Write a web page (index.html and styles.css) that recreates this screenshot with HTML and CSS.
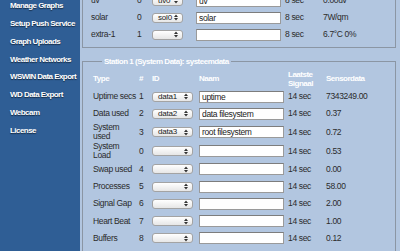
FILE: index.html
```html
<!DOCTYPE html>
<html>
<head>
<meta charset="utf-8">
<link rel="stylesheet" href="styles.css">
</head>
<body>
<nav class="sidebar">
  <a class="nav-item">Manage Graphs</a>
  <a class="nav-item">Setup Push Service</a>
  <a class="nav-item">Graph Uploads</a>
  <a class="nav-item">Weather Networks</a>
  <a class="nav-item">WSWIN Data Export</a>
  <a class="nav-item">WD Data Export</a>
  <a class="nav-item">Webcam</a>
  <a class="nav-item">License</a>
</nav>
<main class="main">
  <fieldset class="box box-sensors">
    <div class="row grid-top">
      <span>uv</span><span>0</span>
      <span><span class="select select-sm">uv0<svg class="arrows" width="4" height="7" viewBox="0 0 4 7"><path d="M0 3 L2 0.5 L4 3 Z M0 4 L2 6.5 L4 4 Z" fill="#333"/></svg></span></span>
      <span><input class="field" type="text" value="uv"></span>
      <span>8 sec</span><span>0.00uv</span>
    </div>
    <div class="row grid-top">
      <span>solar</span><span>0</span>
      <span><span class="select select-sm">sol0<svg class="arrows" width="4" height="7" viewBox="0 0 4 7"><path d="M0 3 L2 0.5 L4 3 Z M0 4 L2 6.5 L4 4 Z" fill="#333"/></svg></span></span>
      <span><input class="field" type="text" value="solar"></span>
      <span>8 sec</span><span>7W/qm</span>
    </div>
    <div class="row grid-top">
      <span>extra-1</span><span>1</span>
      <span><span class="select select-sm"><svg class="arrows" width="4" height="7" viewBox="0 0 4 7"><path d="M0 3 L2 0.5 L4 3 Z M0 4 L2 6.5 L4 4 Z" fill="#333"/></svg></span></span>
      <span><input class="field" type="text" value=""></span>
      <span>8 sec</span><span>6.7°C 0%</span>
    </div>
  </fieldset>

  <fieldset class="box box-station">
    <legend class="legend">Station 1 (System Data): systeemdata</legend>
    <div class="row grid-station head">
      <span>Type</span><span>#</span><span>ID</span><span>Naam</span><span>Laatste<br>Signaal</span><span>Sensordata</span>
    </div>
    <div class="row grid-station">
      <span>Uptime secs</span><span>1</span>
      <span><span class="select">data1<svg class="arrows" width="4" height="7" viewBox="0 0 4 7"><path d="M0 3 L2 0.5 L4 3 Z M0 4 L2 6.5 L4 4 Z" fill="#333"/></svg></span></span>
      <span><input class="field" type="text" value="uptime"></span>
      <span>14 sec</span><span>7343249.00</span>
    </div>
    <div class="row grid-station">
      <span>Data used</span><span>2</span>
      <span><span class="select">data2<svg class="arrows" width="4" height="7" viewBox="0 0 4 7"><path d="M0 3 L2 0.5 L4 3 Z M0 4 L2 6.5 L4 4 Z" fill="#333"/></svg></span></span>
      <span><input class="field" type="text" value="data filesystem"></span>
      <span>14 sec</span><span>0.37</span>
    </div>
    <div class="row grid-station tall">
      <span>System<br>used</span><span>3</span>
      <span><span class="select">data3<svg class="arrows" width="4" height="7" viewBox="0 0 4 7"><path d="M0 3 L2 0.5 L4 3 Z M0 4 L2 6.5 L4 4 Z" fill="#333"/></svg></span></span>
      <span><input class="field" type="text" value="root filesystem"></span>
      <span>14 sec</span><span>0.72</span>
    </div>
    <div class="row grid-station tall">
      <span>System<br>Load</span><span>0</span>
      <span><span class="select"><svg class="arrows" width="4" height="7" viewBox="0 0 4 7"><path d="M0 3 L2 0.5 L4 3 Z M0 4 L2 6.5 L4 4 Z" fill="#333"/></svg></span></span>
      <span><input class="field" type="text" value=""></span>
      <span>14 sec</span><span>0.53</span>
    </div>
    <div class="row grid-station">
      <span>Swap used</span><span>4</span>
      <span><span class="select"><svg class="arrows" width="4" height="7" viewBox="0 0 4 7"><path d="M0 3 L2 0.5 L4 3 Z M0 4 L2 6.5 L4 4 Z" fill="#333"/></svg></span></span>
      <span><input class="field" type="text" value=""></span>
      <span>14 sec</span><span>0.00</span>
    </div>
    <div class="row grid-station">
      <span>Processes</span><span>5</span>
      <span><span class="select"><svg class="arrows" width="4" height="7" viewBox="0 0 4 7"><path d="M0 3 L2 0.5 L4 3 Z M0 4 L2 6.5 L4 4 Z" fill="#333"/></svg></span></span>
      <span><input class="field" type="text" value=""></span>
      <span>14 sec</span><span>58.00</span>
    </div>
    <div class="row grid-station">
      <span>Signal Gap</span><span>6</span>
      <span><span class="select"><svg class="arrows" width="4" height="7" viewBox="0 0 4 7"><path d="M0 3 L2 0.5 L4 3 Z M0 4 L2 6.5 L4 4 Z" fill="#333"/></svg></span></span>
      <span><input class="field" type="text" value=""></span>
      <span>14 sec</span><span>2.00</span>
    </div>
    <div class="row grid-station">
      <span>Heart Beat</span><span>7</span>
      <span><span class="select"><svg class="arrows" width="4" height="7" viewBox="0 0 4 7"><path d="M0 3 L2 0.5 L4 3 Z M0 4 L2 6.5 L4 4 Z" fill="#333"/></svg></span></span>
      <span><input class="field" type="text" value=""></span>
      <span>14 sec</span><span>1.00</span>
    </div>
    <div class="row grid-station">
      <span>Buffers</span><span>8</span>
      <span><span class="select"><svg class="arrows" width="4" height="7" viewBox="0 0 4 7"><path d="M0 3 L2 0.5 L4 3 Z M0 4 L2 6.5 L4 4 Z" fill="#333"/></svg></span></span>
      <span><input class="field" type="text" value=""></span>
      <span>14 sec</span><span>0.12</span>
    </div>
  </fieldset>
</main>
</body>
</html>
```

FILE: styles.css
```css
html, body {
  margin: 0;
  padding: 0;
}
body {
  width: 400px;
  height: 251px;
  overflow: hidden;
  display: flex;
  background: #b2c6e0;
  font-family: "Liberation Sans", Arial, sans-serif;
  font-size: 8.5px;
  letter-spacing: -0.35px;
  color: #2b2b2b;
}
.sidebar {
  width: 80px;
  flex: none;
  background: #2f5e95;
  display: flex;
  flex-direction: column;
  margin-top: -3px;
  height: 260px;
  overflow: hidden;
}
.nav-item {
  display: block;
  height: 17.85px;
  line-height: 17.85px;
  padding-left: 10px;
  white-space: nowrap;
  overflow: hidden;
  width: 68px;
  color: #ffffff;
  font-weight: bold;
  font-size: 8px;
  letter-spacing: -0.55px;
  text-shadow: 0 1px 1px rgba(0, 0, 0, 0.55);
}
.main {
  flex: 1;
  padding: 0 4px 0 2px;
  margin-top: -12px;
}
.box {
  margin: 0;
  border: 1px solid #8b96a4;
  min-width: 0;
}
.box-sensors {
  padding: 3px 0 4px 8px;
}
.box-station {
  margin-top: 9px;
  padding: 3px 0 4px 10px;
}
.legend {
  margin-left: 9px;
  padding: 0 2px;
  line-height: 9px;
  color: #ffffff;
  font-weight: bold;
  font-size: 8px;
  letter-spacing: -0.5px;
}
.row {
  display: grid;
  align-items: center;
  min-height: 17.3px;
  line-height: 9px;
  white-space: nowrap;
}
.row.tall {
  min-height: 19px;
}
.grid-top {
  height: 17px;
  min-height: 17px;
  grid-template-columns: 46px 15px 44px 89px 38px 1fr;
}
.grid-station {
  grid-template-columns: 46px 13px 47px 89px 38px 1fr;
}
.head {
  min-height: 19px;
  color: #ffffff;
  font-weight: bold;
  font-size: 8px;
  letter-spacing: -0.5px;
}
.select {
  display: flex;
  align-items: center;
  justify-content: space-between;
  box-sizing: border-box;
  width: 41px;
  height: 10px;
  padding: 0 4px 0 5px;
  border: 1px solid #a3a3a3;
  border-radius: 3px;
  background: linear-gradient(#ffffff, #e6e6e6);
  font-size: 8px;
  line-height: 8px;
  letter-spacing: -0.2px;
  color: #222;
}
.select-sm {
  width: 31px;
}
.arrows {
  margin-left: auto;
  display: block;
}
.field {
  display: block;
  box-sizing: border-box;
  width: 85px;
  height: 12px;
  margin: 0;
  padding: 0 2px;
  border: 1px solid #9a9a9a;
  border-top-color: #7d7d7d;
  background: #ffffff;
  font-family: "Liberation Sans", Arial, sans-serif;
  font-size: 8.5px;
  letter-spacing: -0.35px;
  color: #222;
  outline: none;
}
```
